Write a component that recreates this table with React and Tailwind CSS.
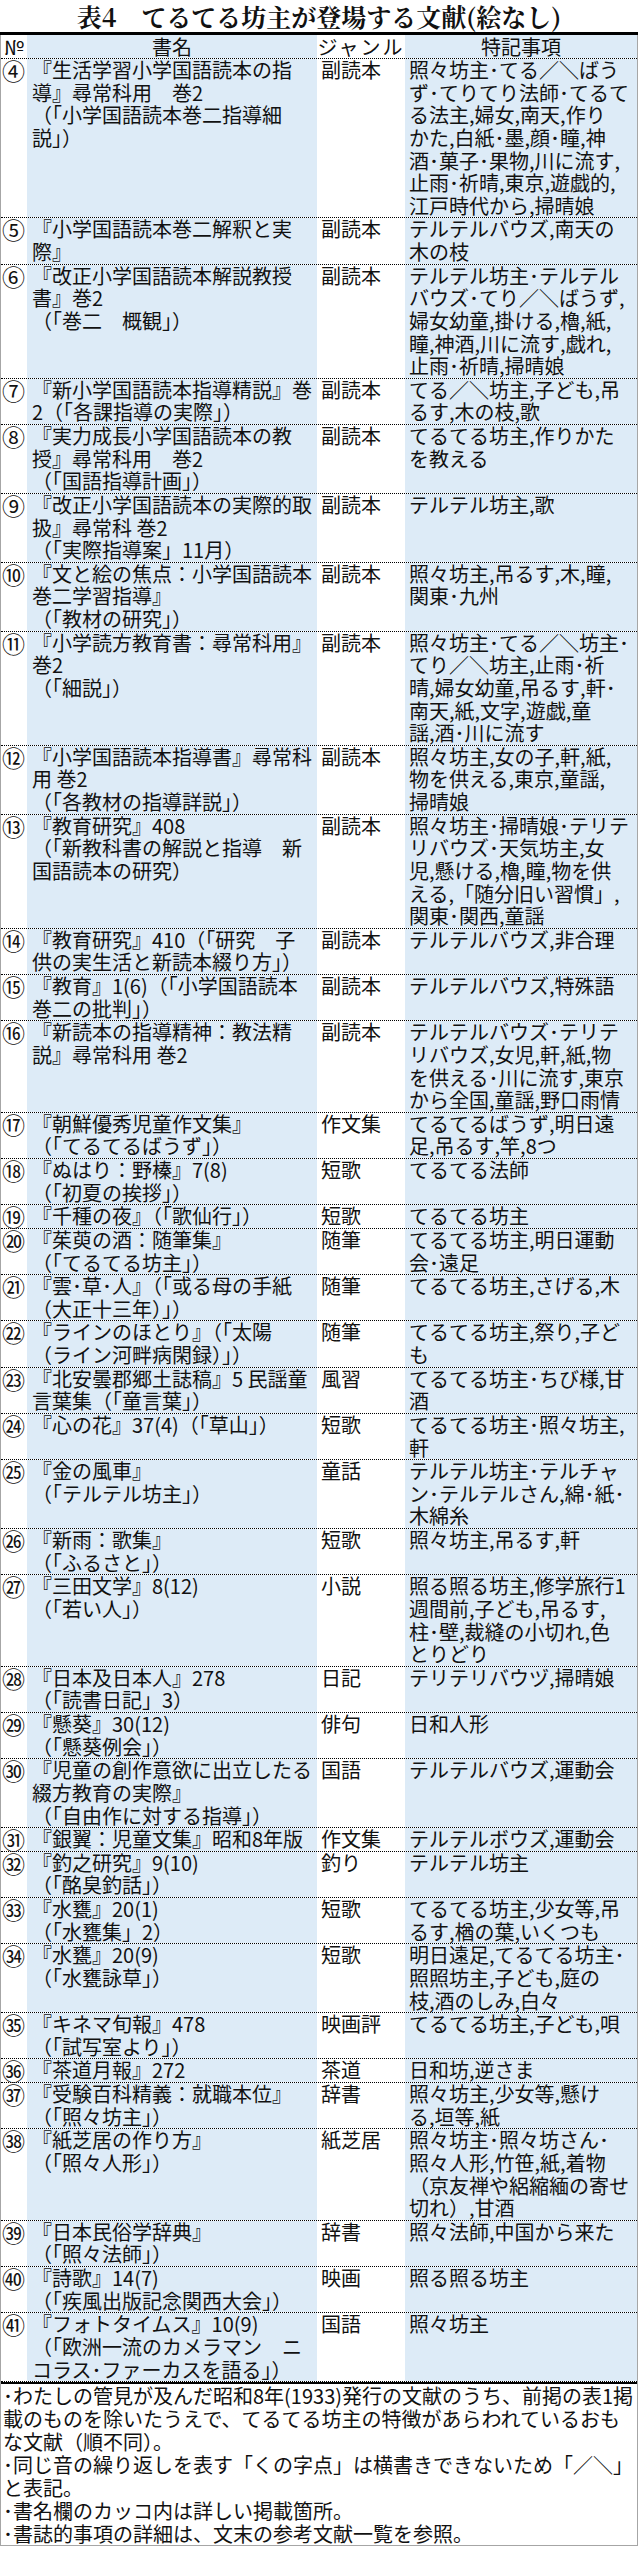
const rows = [
  {
    no: "④",
    title: ["『生活学習小学国語読本の指", "導』尋常科用　巻2", "（「小学国語読本巻二指導細", "説」）"],
    genre: "副読本",
    notes: [
      "照々坊主･てる／＼ばう",
      "ず･てりてり法師･てるて",
      "る法主,婦女,南天,作り",
      "かた,白紙･墨,顔･瞳,神",
      "酒･菓子･果物,川に流す,",
      "止雨･祈晴,東京,遊戯的,",
      "江戸時代から,掃晴娘",
    ],
  },
  {
    no: "⑤",
    title: ["『小学国語読本巻二解釈と実", "際』"],
    genre: "副読本",
    notes: ["テルテルバウズ,南天の", "木の枝"],
  },
  {
    no: "⑥",
    title: ["『改正小学国語読本解説教授", "書』巻2", "（「巻二　概観」）"],
    genre: "副読本",
    notes: [
      "テルテル坊主･テルテル",
      "バウズ･てり／＼ばうず,",
      "婦女幼童,掛ける,櫓,紙,",
      "瞳,神酒,川に流す,戯れ,",
      "止雨･祈晴,掃晴娘",
    ],
  },
  {
    no: "⑦",
    title: ["『新小学国語読本指導精説』巻", "2（「各課指導の実際」）"],
    genre: "副読本",
    notes: ["てる／＼坊主,子ども,吊", "るす,木の枝,歌"],
  },
  {
    no: "⑧",
    title: ["『実力成長小学国語読本の教", "授』尋常科用　巻2", "（「国語指導計画」）"],
    genre: "副読本",
    notes: ["てるてる坊主,作りかた", "を教える"],
  },
  {
    no: "⑨",
    title: ["『改正小学国語読本の実際的取", "扱』尋常科 巻2", "（「実際指導案」11月）"],
    genre: "副読本",
    notes: ["テルテル坊主,歌"],
  },
  {
    no: "⑩",
    title: ["『文と絵の焦点：小学国語読本", "巻二学習指導』", "（「教材の研究」）"],
    genre: "副読本",
    notes: ["照々坊主,吊るす,木,瞳,", "関東･九州"],
  },
  {
    no: "⑪",
    title: ["『小学読方教育書：尋常科用』", "巻2", "（「細説」）"],
    genre: "副読本",
    notes: [
      "照々坊主･てる／＼坊主･",
      "てり／＼坊主,止雨･祈",
      "晴,婦女幼童,吊るす,軒･",
      "南天,紙,文字,遊戯,童",
      "謡,酒･川に流す",
    ],
  },
  {
    no: "⑫",
    title: ["『小学国語読本指導書』尋常科", "用 巻2", "（「各教材の指導詳説」）"],
    genre: "副読本",
    notes: ["照々坊主,女の子,軒,紙,", "物を供える,東京,童謡,", "掃晴娘"],
  },
  {
    no: "⑬",
    title: ["『教育研究』408", "（「新教科書の解説と指導　新", "国語読本の研究）"],
    genre: "副読本",
    notes: [
      "照々坊主･掃晴娘･テリテ",
      "リバウズ･天気坊主,女",
      "児,懸ける,櫓,瞳,物を供",
      "える,「随分旧い習慣」,",
      "関東･関西,童謡",
    ],
  },
  {
    no: "⑭",
    title: ["『教育研究』410（「研究　子", "供の実生活と新読本綴り方」）"],
    genre: "副読本",
    notes: ["テルテルバウズ,非合理"],
  },
  {
    no: "⑮",
    title: ["『教育』1(6)（「小学国語読本", "巻二の批判」）"],
    genre: "副読本",
    notes: ["テルテルバウズ,特殊語"],
  },
  {
    no: "⑯",
    title: ["『新読本の指導精神：教法精", "説』尋常科用 巻2"],
    genre: "副読本",
    notes: [
      "テルテルバウズ･テリテ",
      "リバウズ,女児,軒,紙,物",
      "を供える･川に流す,東京",
      "から全国,童謡,野口雨情",
    ],
  },
  {
    no: "⑰",
    title: ["『朝鮮優秀児童作文集』", "（「てるてるばうず」）"],
    genre: "作文集",
    notes: ["てるてるばうず,明日遠", "足,吊るす,竿,8つ"],
  },
  {
    no: "⑱",
    title: ["『ぬはり：野榛』7(8)", "（「初夏の挨拶」）"],
    genre: "短歌",
    notes: ["てるてる法師"],
  },
  {
    no: "⑲",
    title: ["『千種の夜』（「歌仙行」）"],
    genre: "短歌",
    notes: ["てるてる坊主"],
  },
  {
    no: "⑳",
    title: ["『茱萸の酒：随筆集』", "（「てるてる坊主」）"],
    genre: "随筆",
    notes: ["てるてる坊主,明日運動", "会･遠足"],
  },
  {
    no: "㉑",
    title: ["『雲･草･人』（「或る母の手紙", "（大正十三年）」）"],
    genre: "随筆",
    notes: ["てるてる坊主,さげる,木"],
  },
  {
    no: "㉒",
    title: ["『ラインのほとり』（「太陽", "（ライン河畔病閑録）」）"],
    genre: "随筆",
    notes: ["てるてる坊主,祭り,子ど", "も"],
  },
  {
    no: "㉓",
    title: ["『北安曇郡郷土誌稿』5 民謡童", "言葉集（「童言葉」）"],
    genre: "風習",
    notes: ["てるてる坊主･ちび様,甘", "酒"],
  },
  {
    no: "㉔",
    title: ["『心の花』37(4)（「草山」）"],
    genre: "短歌",
    notes: ["てるてる坊主･照々坊主,", "軒"],
  },
  {
    no: "㉕",
    title: ["『金の風車』", "（「テルテル坊主」）"],
    genre: "童話",
    notes: ["テルテル坊主･テルチャ", "ン･テルテルさん,綿･紙･", "木綿糸"],
  },
  {
    no: "㉖",
    title: ["『新雨：歌集』", "（「ふるさと」）"],
    genre: "短歌",
    notes: ["照々坊主,吊るす,軒"],
  },
  {
    no: "㉗",
    title: ["『三田文学』8(12)", "（「若い人」）"],
    genre: "小説",
    notes: ["照る照る坊主,修学旅行1", "週間前,子ども,吊るす,", "柱･壁,裁縫の小切れ,色", "とりどり"],
  },
  {
    no: "㉘",
    title: ["『日本及日本人』278", "（「読書日記」3）"],
    genre: "日記",
    notes: ["テリテリバウヅ,掃晴娘"],
  },
  {
    no: "㉙",
    title: ["『懸葵』30(12)", "（「懸葵例会」）"],
    genre: "俳句",
    notes: ["日和人形"],
  },
  {
    no: "㉚",
    title: ["『児童の創作意欲に出立したる", "綴方教育の実際』", "（「自由作に対する指導」）"],
    genre: "国語",
    notes: ["テルテルバウズ,運動会"],
  },
  {
    no: "㉛",
    title: ["『銀翼：児童文集』昭和8年版"],
    genre: "作文集",
    notes: ["テルテルボウズ,運動会"],
  },
  {
    no: "㉜",
    title: ["『釣之研究』9(10)", "（「酩臭釣話」）"],
    genre: "釣り",
    notes: ["テルテル坊主"],
  },
  {
    no: "㉝",
    title: ["『水甕』20(1)", "（「水甕集」2）"],
    genre: "短歌",
    notes: ["てるてる坊主,少女等,吊", "るす,楢の葉,いくつも"],
  },
  {
    no: "㉞",
    title: ["『水甕』20(9)", "（「水甕詠草」）"],
    genre: "短歌",
    notes: ["明日遠足,てるてる坊主･", "照照坊主,子ども,庭の", "枝,酒のしみ,白々"],
  },
  {
    no: "㉟",
    title: ["『キネマ旬報』478", "（「試写室より」）"],
    genre: "映画評",
    notes: ["てるてる坊主,子ども,唄"],
  },
  {
    no: "㊱",
    title: ["『茶道月報』272"],
    genre: "茶道",
    notes: ["日和坊,逆さま"],
  },
  {
    no: "㊲",
    title: ["『受験百科精義：就職本位』", "（「照々坊主」）"],
    genre: "辞書",
    notes: ["照々坊主,少女等,懸け", "る,垣等,紙"],
  },
  {
    no: "㊳",
    title: ["『紙芝居の作り方』", "（「照々人形」）"],
    genre: "紙芝居",
    notes: ["照々坊主･照々坊さん･", "照々人形,竹笹,紙,着物", "（京友禅や絽縮緬の寄せ", "切れ）,甘酒"],
  },
  {
    no: "㊴",
    title: ["『日本民俗学辞典』", "（「照々法師」）"],
    genre: "辞書",
    notes: ["照々法師,中国から来た"],
  },
  {
    no: "㊵",
    title: ["『詩歌』14(7)", "（「疾風出版記念関西大会」）"],
    genre: "映画",
    notes: ["照る照る坊主"],
  },
  {
    no: "㊶",
    title: ["『フォトタイムス』10(9)", "（「欧洲一流のカメラマン　ニ", "コラス･ファーカスを語る」）"],
    genre: "国語",
    notes: ["照々坊主"],
  },
];

const footnotes = [
  "･わたしの管見が及んだ昭和8年(1933)発行の文献のうち、前掲の表1掲",
  "載のものを除いたうえで、てるてる坊主の特徴があらわれているおも",
  "な文献（順不同）。",
  "･同じ音の繰り返しを表す「くの字点」は横書きできないため「／＼」",
  "と表記。",
  "･書名欄のカッコ内は詳しい掲載箇所。",
  "･書誌的事項の詳細は、文末の参考文献一覧を参照。",
];

function Lines({ items }) {
  return items.map((line, i) => (
    <div key={i} className="whitespace-nowrap">
      {line}
    </div>
  ));
}

export default function App() {
  return (
    <div className="w-[638px] bg-white text-[#111] font-['Noto_Sans_CJK_JP',sans-serif] text-[20px]">
      <div className="h-[35px] flex items-center justify-center border-b-[3px] border-black font-['Noto_Serif_CJK_JP','Noto_Sans_CJK_JP',serif] font-bold text-[25px] leading-none">
        表4　てるてる坊主が登場する文献(絵なし)
      </div>

      <div className="border-x border-[#a6a6a6]">
        <div className="flex h-[24px] leading-[23px] border-b border-dotted border-black">
          <div className="w-[26px] shrink-0 text-center">№</div>
          <div className="w-[290px] shrink-0 bg-[#ddebf7] text-center">書名</div>
          <div className="w-[88px] shrink-0 text-center tracking-[2px]">ジャンル</div>
          <div className="flex-1 bg-[#ddebf7] text-center">特記事項</div>
        </div>

        {rows.map((row) => (
          <div
            key={row.no}
            className="flex leading-[22.63px] border-b border-dotted border-black last:border-b-0"
          >
            <div className="w-[26px] shrink-0 pl-[1px] text-[23px] leading-[22.63px]">{row.no}</div>
            <div className="w-[290px] shrink-0 bg-[#ddebf7] pl-[5px]">
              <Lines items={row.title} />
            </div>
            <div className="w-[88px] shrink-0 pl-[4px]">{row.genre}</div>
            <div className="flex-1 bg-[#ddebf7] pl-[4px]">
              <Lines items={row.notes} />
            </div>
          </div>
        ))}

        <div className="border-t-2 border-black border-b border-b-[#a6a6a6] pl-[2px] leading-[23px]">
          <Lines items={footnotes} />
        </div>
      </div>
    </div>
  );
}
